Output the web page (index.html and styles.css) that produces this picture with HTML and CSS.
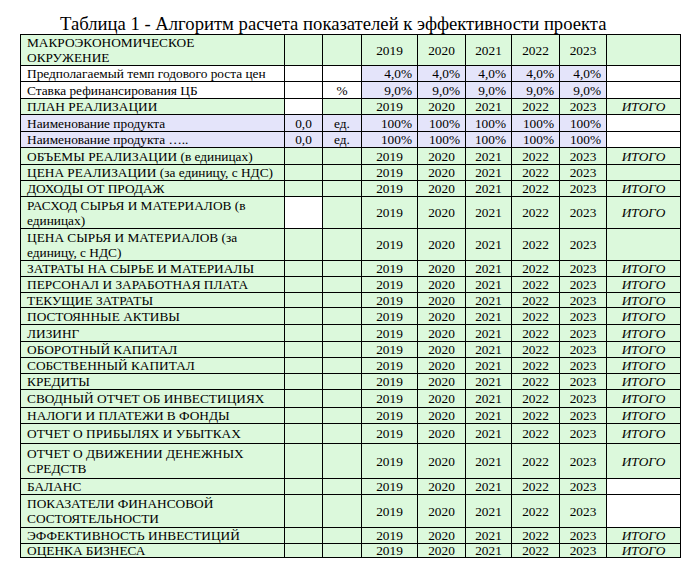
FILE: index.html
```html
<!DOCTYPE html>
<html lang="ru">
<head>
<meta charset="utf-8">
<title>Таблица 1</title>
<link rel="stylesheet" href="styles.css">
</head>
<body>
<div class="page">
<h1 class="title">Таблица 1 - Алгоритм расчета показателей к эффективности проекта</h1>
<table class="grid">
<colgroup>
<col class="c1"><col class="c2"><col class="c3"><col class="c4"><col class="c5"><col class="c6"><col class="c7"><col class="c8"><col class="c9">
</colgroup>
<tbody>
<tr class="h31 two"><td class="g lbl">МАКРОЭКОНОМИЧЕСКОЕ<br>ОКРУЖЕНИЕ</td><td class="g"></td><td class="g"></td><td class="g c">2019</td><td class="g c">2020</td><td class="g c">2021</td><td class="g c">2022</td><td class="g c">2023</td><td class="g"></td></tr>
<tr class="h16"><td class="w lbl">Предполагаемый темп годового роста цен</td><td class="w"></td><td class="w"></td><td class="l r">4,0%</td><td class="l r">4,0%</td><td class="l r">4,0%</td><td class="l r">4,0%</td><td class="l r">4,0%</td><td class="w"></td></tr>
<tr class="h17"><td class="w lbl">Ставка рефинансирования ЦБ</td><td class="w"></td><td class="w c">%</td><td class="l r">9,0%</td><td class="l r">9,0%</td><td class="l r">9,0%</td><td class="l r">9,0%</td><td class="l r">9,0%</td><td class="w"></td></tr>
<tr class="h16"><td class="g lbl">ПЛАН РЕАЛИЗАЦИИ</td><td class="w"></td><td class="g"></td><td class="g c">2019</td><td class="g c">2020</td><td class="g c">2021</td><td class="g c">2022</td><td class="g c">2023</td><td class="g it">ИТОГО</td></tr>
<tr class="h17"><td class="l lbl">Наименование продукта</td><td class="l c">0,0</td><td class="l c">ед.</td><td class="l r">100%</td><td class="l r">100%</td><td class="l r">100%</td><td class="l r">100%</td><td class="l r">100%</td><td class="w"></td></tr>
<tr class="h16"><td class="l lbl">Наименование продукта …..</td><td class="l c">0,0</td><td class="l c">ед.</td><td class="l r">100%</td><td class="l r">100%</td><td class="l r">100%</td><td class="l r">100%</td><td class="l r">100%</td><td class="w"></td></tr>
<tr class="h17"><td class="g lbl">ОБЪЕМЫ РЕАЛИЗАЦИИ (в единицах)</td><td class="g"></td><td class="g"></td><td class="g c">2019</td><td class="g c">2020</td><td class="g c">2021</td><td class="g c">2022</td><td class="g c">2023</td><td class="g it">ИТОГО</td></tr>
<tr class="h16"><td class="g lbl">ЦЕНА РЕАЛИЗАЦИИ (за единицу, с НДС)</td><td class="g"></td><td class="g"></td><td class="g c">2019</td><td class="g c">2020</td><td class="g c">2021</td><td class="g c">2022</td><td class="g c">2023</td><td class="g"></td></tr>
<tr class="h16"><td class="g lbl">ДОХОДЫ ОТ ПРОДАЖ</td><td class="g"></td><td class="g"></td><td class="g c">2019</td><td class="g c">2020</td><td class="g c">2021</td><td class="g c">2022</td><td class="g c">2023</td><td class="g it">ИТОГО</td></tr>
<tr class="h32 two"><td class="g lbl">РАСХОД СЫРЬЯ И МАТЕРИАЛОВ (в<br>единицах)</td><td class="w"></td><td class="g"></td><td class="g c">2019</td><td class="g c">2020</td><td class="g c">2021</td><td class="g c">2022</td><td class="g c">2023</td><td class="g it">ИТОГО</td></tr>
<tr class="h32 two"><td class="g lbl">ЦЕНА СЫРЬЯ И МАТЕРИАЛОВ (за<br>единицу, с НДС)</td><td class="g"></td><td class="g"></td><td class="g c">2019</td><td class="g c">2020</td><td class="g c">2021</td><td class="g c">2022</td><td class="g c">2023</td><td class="g"></td></tr>
<tr class="h16"><td class="g lbl">ЗАТРАТЫ НА СЫРЬЕ И МАТЕРИАЛЫ</td><td class="g"></td><td class="g"></td><td class="g c">2019</td><td class="g c">2020</td><td class="g c">2021</td><td class="g c">2022</td><td class="g c">2023</td><td class="g it">ИТОГО</td></tr>
<tr class="h16"><td class="g lbl">ПЕРСОНАЛ И ЗАРАБОТНАЯ ПЛАТА</td><td class="g"></td><td class="g"></td><td class="g c">2019</td><td class="g c">2020</td><td class="g c">2021</td><td class="g c">2022</td><td class="g c">2023</td><td class="g it">ИТОГО</td></tr>
<tr class="h15"><td class="g lbl">ТЕКУЩИЕ ЗАТРАТЫ</td><td class="g"></td><td class="g"></td><td class="g c">2019</td><td class="g c">2020</td><td class="g c">2021</td><td class="g c">2022</td><td class="g c">2023</td><td class="g it">ИТОГО</td></tr>
<tr class="h17"><td class="g lbl">ПОСТОЯННЫЕ АКТИВЫ</td><td class="g"></td><td class="g"></td><td class="g c">2019</td><td class="g c">2020</td><td class="g c">2021</td><td class="g c">2022</td><td class="g c">2023</td><td class="g it">ИТОГО</td></tr>
<tr class="h17"><td class="g lbl">ЛИЗИНГ</td><td class="g"></td><td class="g"></td><td class="g c">2019</td><td class="g c">2020</td><td class="g c">2021</td><td class="g c">2022</td><td class="g c">2023</td><td class="g it">ИТОГО</td></tr>
<tr class="h16"><td class="g lbl">ОБОРОТНЫЙ КАПИТАЛ</td><td class="g"></td><td class="g"></td><td class="g c">2019</td><td class="g c">2020</td><td class="g c">2021</td><td class="g c">2022</td><td class="g c">2023</td><td class="g it">ИТОГО</td></tr>
<tr class="h16"><td class="g lbl">СОБСТВЕННЫЙ КАПИТАЛ</td><td class="g"></td><td class="g"></td><td class="g c">2019</td><td class="g c">2020</td><td class="g c">2021</td><td class="g c">2022</td><td class="g c">2023</td><td class="g it">ИТОГО</td></tr>
<tr class="h16"><td class="g lbl">КРЕДИТЫ</td><td class="g"></td><td class="g"></td><td class="g c">2019</td><td class="g c">2020</td><td class="g c">2021</td><td class="g c">2022</td><td class="g c">2023</td><td class="g it">ИТОГО</td></tr>
<tr class="h18"><td class="g lbl">СВОДНЫЙ ОТЧЕТ ОБ ИНВЕСТИЦИЯХ</td><td class="g"></td><td class="g"></td><td class="g c">2019</td><td class="g c">2020</td><td class="g c">2021</td><td class="g c">2022</td><td class="g c">2023</td><td class="g it">ИТОГО</td></tr>
<tr class="h16"><td class="g lbl">НАЛОГИ И ПЛАТЕЖИ В ФОНДЫ</td><td class="g"></td><td class="g"></td><td class="g c">2019</td><td class="g c">2020</td><td class="g c">2021</td><td class="g c">2022</td><td class="g c">2023</td><td class="g it">ИТОГО</td></tr>
<tr class="h20"><td class="g lbl">ОТЧЕТ О ПРИБЫЛЯХ И УБЫТКАХ</td><td class="g"></td><td class="g"></td><td class="g c">2019</td><td class="g c">2020</td><td class="g c">2021</td><td class="g c">2022</td><td class="g c">2023</td><td class="g it">ИТОГО</td></tr>
<tr class="h35 two"><td class="g lbl">ОТЧЕТ О ДВИЖЕНИИ ДЕНЕЖНЫХ<br>СРЕДСТВ</td><td class="g"></td><td class="g"></td><td class="g c">2019</td><td class="g c">2020</td><td class="g c">2021</td><td class="g c">2022</td><td class="g c">2023</td><td class="g it">ИТОГО</td></tr>
<tr class="h16"><td class="g lbl">БАЛАНС</td><td class="g"></td><td class="g"></td><td class="g c">2019</td><td class="g c">2020</td><td class="g c">2021</td><td class="g c">2022</td><td class="g c">2023</td><td class="w"></td></tr>
<tr class="h33 two"><td class="g lbl">ПОКАЗАТЕЛИ ФИНАНСОВОЙ<br>СОСТОЯТЕЛЬНОСТИ</td><td class="g"></td><td class="g"></td><td class="g c">2019</td><td class="g c">2020</td><td class="g c">2021</td><td class="g c">2022</td><td class="g c">2023</td><td class="w"></td></tr>
<tr class="h16"><td class="g lbl">ЭФФЕКТИВНОСТЬ ИНВЕСТИЦИЙ</td><td class="g"></td><td class="g"></td><td class="g c">2019</td><td class="g c">2020</td><td class="g c">2021</td><td class="g c">2022</td><td class="g c">2023</td><td class="g it">ИТОГО</td></tr>
<tr class="h14"><td class="g lbl">ОЦЕНКА БИЗНЕСА</td><td class="g"></td><td class="g"></td><td class="g c">2019</td><td class="g c">2020</td><td class="g c">2021</td><td class="g c">2022</td><td class="g c">2023</td><td class="g it">ИТОГО</td></tr>
</tbody>
</table>
</div>
</body>
</html>
```
FILE: styles.css
```css
html, body {
  margin: 0;
  padding: 0;
  background: #ffffff;
}

body {
  font-family: "Liberation Serif", "Times New Roman", serif;
  color: #000000;
}

.page {
  padding: 15px 0 0 20px;
}

.title {
  margin: 0 0 1px 40px;
  font-family: "Liberation Serif", "Times New Roman", serif;
  font-size: 18.67px;
  font-weight: normal;
  line-height: 18px;
  white-space: nowrap;
}

.grid {
  border-collapse: collapse;
  table-layout: fixed;
  width: 660px;
  font-family: "Liberation Serif", "Times New Roman", serif;
  font-size: 13.33px;
}

.c1 { width: 264px; }
.c2 { width: 38px; }
.c3 { width: 39px; }
.c4 { width: 56px; }
.c5 { width: 48px; }
.c6 { width: 46px; }
.c7 { width: 48px; }
.c8 { width: 47px; }
.c9 { width: 74px; }

.grid td {
  border: 1px solid #000000;
  padding: 0 5px;
  font-family: "Liberation Serif", "Times New Roman", serif;
  font-weight: normal;
  line-height: 13px;
  vertical-align: middle;
  white-space: nowrap;
  overflow: hidden;
}

.grid tr.two td {
  line-height: 15px;
}

.h14 { height: 14px; }
.h15 { height: 15px; }
.h16 { height: 16px; }
.h17 { height: 17px; }
.h18 { height: 18px; }
.h20 { height: 20px; }
.h31 { height: 31px; }
.h32 { height: 32px; }
.h33 { height: 33px; }
.h35 { height: 35px; }

.g { background: #dcf9dc; }
.l { background: #e4e4fa; }
.w { background: #ffffff; }

.grid td.lbl {
  text-align: left;
  padding-left: 6px;
}

.c { text-align: center; }
.r { text-align: right; }

.it {
  text-align: center;
  font-style: italic;
}
```
